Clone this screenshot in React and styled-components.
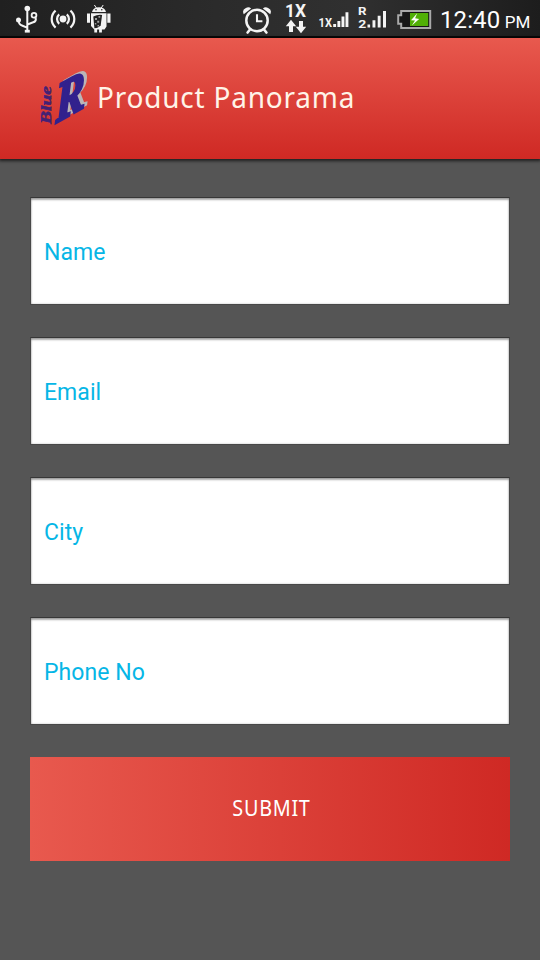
import React from 'react'
import styled, { ThemeProvider, createGlobalStyle } from 'styled-components';

const theme = {
  color: {
    page: '#555555',
    redLight: '#e8594e',
    redDark: '#cf2924',
    hint: '#06b6e6',
    icon: '#f4f4f4'
  }
};

const GlobalStyle = createGlobalStyle`
  * {
    box-sizing: border-box;
  }

  body {
    margin: 0;
    background: ${theme.color.page};
    font-family: Roboto, "Liberation Sans", sans-serif;
  }
`;

const Layout = styled.div`
  display: flex;
  flex-direction: column;
  width: 540px;
  height: 960px;
  overflow: hidden;
  background: ${props => props.theme.color.page};
`;

const StatusBar = styled.div`
  display: flex;
  flex: none;
  justify-content: space-between;
  height: 38px;
  background: linear-gradient(90deg, #202020 0%, #2b2b2b 40%, #303030 65%, #1d1d1d 100%);
  border-bottom: 2px solid #090707;
`;

const StatusIcons = styled.svg`
  display: block;
  flex: none;
  fill: ${props => props.theme.color.icon};
  font-family: Roboto, sans-serif;
  font-weight: 700;
`;

const StatusRight = styled.div`
  display: flex;
`;

const Clock = styled.div`
  display: flex;
  align-items: baseline;
  width: 100px;
  padding-top: 5px;
  color: #fff;
  font-size: 24px;
  line-height: 31px;
  letter-spacing: .1px;
  white-space: nowrap;
`;

const Meridiem = styled.span`
  margin-left: 4.5px;
  font-size: 17px;
`;

const Header = styled.header`
  display: flex;
  flex: none;
  align-items: center;
  height: 121px;
  padding-left: 38px;
  background: linear-gradient(180deg, ${props => props.theme.color.redLight}, ${props => props.theme.color.redDark});
  box-shadow: 0 1px 3px 1px rgba(0, 0, 0, .65);
`;

const Title = styled.h1`
  margin: 0 0 4px 7px;
  color: #fff4e8;
  font-family: "Noto Sans", sans-serif;
  font-size: 29px;
  font-weight: 400;
  letter-spacing: .85px;
  white-space: nowrap;
  transform: scaleX(.963);
  transform-origin: left;
`;

const Form = styled.form`
  display: flex;
  flex-direction: column;
  gap: 32px;
  padding: 38px 30px 0;
`;

const Field = styled.label`
  display: flex;
  align-items: center;
  height: 108px;
  padding: 2px 13px 0;
  background: #fff;
  border: 1px solid #484848;
  border-top-color: #373737;
  box-shadow: inset 0 2px 2px rgba(0, 0, 0, .32), inset 0 0 2px rgba(0, 0, 0, .3);
  color: ${props => props.theme.color.hint};
  font-size: 23px;
  letter-spacing: .05px;
`;

const Submit = styled.button`
  height: 104px;
  padding: 0 0 4px 2px;
  border: 0;
  background: linear-gradient(90deg, ${props => props.theme.color.redLight}, ${props => props.theme.color.redDark});
  color: #fff;
  font-family: "Noto Sans", sans-serif;
  font-size: 22px;
  letter-spacing: .8px;
`;

const ButtonLabel = styled.span`
  display: inline-block;
  transform: scaleX(.9);
`;

// usb, hotspot, debugging
const Notifications = () => (
  <StatusIcons width="120" height="36" viewBox="0 0 120 36">
    <g fill="none" stroke="#f4f4f4" strokeWidth="2">
      <path d="M27.3 8v22M18.5 19.5q0 5 3.5 6l5 2.2M35 16.5q2.5 5-2.5 6l-5 2"/>
      <circle cx="34" cy="15.3" r="2.4" strokeWidth="1.8"/>
      <path d="M59.2 14.4a6.2 6.2 0 0 0 0 9.4M66.8 14.4a6.2 6.2 0 0 1 0 9.4M55.6 10.6a11.2 11.2 0 0 0 0 17M70.4 10.6a11.2 11.2 0 0 1 0 17" strokeWidth="2.2"/>
    </g>
    <circle cx="27.3" cy="8.5" r="2.8"/>
    <circle cx="18.5" cy="20" r="2.5"/>
    <path d="M24.8 29.8h5v2.8h-5z"/>
    <circle cx="63" cy="19" r="3.4"/>
    <path d="M92 12q1-4.8 7-4.8t7 4.8zM91 13.2h15.5v13.3l-2 3h-2.6v3h-2.8v-3h-2v3h-2.8v-3L91 26zM87 13.5h3v9.3h-3zM107.3 13.5h3.2v9.3h-3.2z"/>
    <path d="M94.4 5l2 3M103.2 5l-2 3" stroke="#f4f4f4" strokeWidth="1"/>
    <g fill="#222">
      <circle cx="96" cy="9.8" r=".8"/>
      <circle cx="101.8" cy="9.8" r=".8"/>
      <path d="M93.3 16.4q4-2 8.8-1.5l-1.4 10.4q-2.3 3-6.3 3z"/>
    </g>
    <path d="M95 18h2v2h-2zM98.5 16h1.7v1.7h-1.7zM97.2 20.8h2v2h-2zM94.8 23h1.5v1.5h-1.5zM97.5 25h1.5v1.5h-1.5z" opacity=".6"/>
  </StatusIcons>
);

// alarm, data, both sims, battery
const Indicators = () => (
  <StatusIcons width="200" height="36" viewBox="240 0 200 36">
    <g fill="none" stroke="#f4f4f4">
      <circle cx="257" cy="20.5" r="10.7" strokeWidth="2.5"/>
      <path d="M257 14.2v7h5.4" strokeWidth="2.1"/>
      <path d="M250 29.5l-2.4 3M264 29.5l2.4 3" strokeWidth="2.6" strokeLinecap="round"/>
    </g>
    <path d="M243.7 14.2q-2-4.5 2.2-6.3 3.2-1.4 5.2.7zM270.3 14.2q2-4.5-2.2-6.3-3.2-1.4-5.2.7z"/>
    <text x="285" y="17" fontSize="18" textLength="21" lengthAdjust="spacingAndGlyphs">1X</text>
    <path d="M291 19.8l5.2 6.4h-3.2V32h-4v-5.8h-3.2zM301 33.2l-5.2-6.4h3.2V21h4v5.8h3.2z"/>
    <text x="318.6" y="27" fontSize="12" textLength="13.5" lengthAdjust="spacingAndGlyphs">1X</text>
    <path d="M333.2 24h2.9v3h-2.9zM337.4 21h2.9v6h-2.9zM341.5 16.5h2.9V27h-2.9zM345.5 12.2h2.9V27h-2.9z"/>
    <text x="358" y="14.8" fontSize="11" textLength="8.5" lengthAdjust="spacingAndGlyphs">R</text>
    <text x="358.2" y="27.6" fontSize="11" textLength="8" lengthAdjust="spacingAndGlyphs">2</text>
    <path d="M367.5 24.6h2.6v2.9h-2.6zM372.5 20.2h2.9v7.3h-2.9zM377.7 15.8h2.9v11.7h-2.9zM383 11h3v16.5h-3z"/>
    <path d="M401.2 11h29v17h-29v-4.2h-3v-8.6h3z" fill="#171717" stroke="#a9a9a9" strokeWidth="2"/>
    <path d="M410 13h18.2v13H410z" fill="#51b006"/>
    <path d="M417.2 13.2l-6.2 7 4 .4-3.2 4.8 7.4-6.5-4.1-.6z" fill="#fff"/>
  </StatusIcons>
);

const Logo = styled.svg`
  display: block;
  flex: none;
  width: 52px;
  height: 66px;
  overflow: visible;
`;

const Brand = () => (
  <Logo viewBox="38 66 52 66">
    <g fontFamily="Liberation Serif" fontWeight="700" fontStyle="italic">
      <g fontSize="60">
        <text transform="matrix(.72 -.4 0 .92 59.5 119.5)" fill="#bbb5b7" stroke="#bbb5b7" strokeWidth="2.2">R</text>
        <text transform="matrix(.72 -.4 0 .92 56 122.8)" fill="#32218d" stroke="#32218d" strokeWidth="3.4">R</text>
      </g>
      <text transform="translate(51 124) rotate(-90)" fill="#432174" stroke="#432174" strokeWidth=".5" fontSize="15" textLength="38" lengthAdjust="spacingAndGlyphs">Blue</text>
    </g>
  </Logo>
);

const fields = ['Name', 'Email', 'City', 'Phone No'];

const App = () => (
  <ThemeProvider theme={theme}>
    <GlobalStyle/>
    <Layout>
      <StatusBar>
        <Notifications/>
        <StatusRight>
          <Indicators/>
          <Clock>
            12:40<Meridiem>PM</Meridiem>
          </Clock>
        </StatusRight>
      </StatusBar>
      <Header>
        <Brand/>
        <Title>Product Panorama</Title>
      </Header>
      <Form>
        {fields.map(name => (
          <Field key={name}>{name}</Field>
        ))}
        <Submit type="button">
          <ButtonLabel>SUBMIT</ButtonLabel>
        </Submit>
      </Form>
    </Layout>
  </ThemeProvider>
);

export default App
